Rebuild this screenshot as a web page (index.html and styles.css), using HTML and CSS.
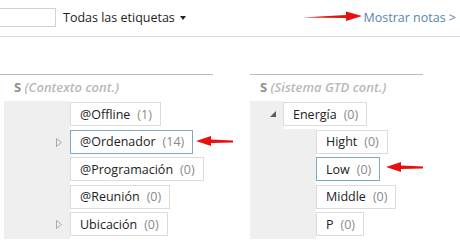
FILE: index.html
```
<!DOCTYPE html>
<html lang="es">
<head>
    <meta charset="UTF-8">
    <title>Etiquetas</title>
    <link rel="stylesheet" href="styles.css">
</head>
<body>
    <div class="topbar">
        <input class="search" type="text">
        <div class="filter">Todas las etiquetas <span class="caret"></span></div>
        <div class="show-notes">Mostrar notas &gt;</div>
    </div>

    <div class="columns">
        <div class="col col-left">
            <div class="col-head"><b>S</b> <i>(Contexto cont.)</i></div>
            <div class="tree">
                <div class="row"><div class="indent lvl2"></div><div class="tag">@Offline<span class="count">(1)</span></div></div>
                <div class="row"><div class="indent lvl2"><svg class="tri-open" width="6" height="9" viewBox="0 0 6 9"><path d="M0.5 0.5 L5.5 4.5 L0.5 8.5 Z" fill="none" stroke="#a8a8a8" stroke-width="1"/></svg></div><div class="tag active">@Ordenador<span class="count">(14)</span></div></div>
                <div class="row"><div class="indent lvl2"></div><div class="tag">@Programación<span class="count">(0)</span></div></div>
                <div class="row"><div class="indent lvl2"></div><div class="tag">@Reunión<span class="count">(0)</span></div></div>
                <div class="row"><div class="indent lvl2"><svg class="tri-open" width="6" height="9" viewBox="0 0 6 9"><path d="M0.5 0.5 L5.5 4.5 L0.5 8.5 Z" fill="none" stroke="#a8a8a8" stroke-width="1"/></svg></div><div class="tag">Ubicación<span class="count">(0)</span></div></div>
            </div>
        </div>
        <div class="col col-right">
            <div class="col-head"><b>S</b> <i>(Sistema GTD cont.)</i></div>
            <div class="tree">
                <div class="row"><div class="indent lvl1"><span class="tri-down"></span></div><div class="tag">Energía<span class="count">(0)</span></div></div>
                <div class="row"><div class="indent lvl2"></div><div class="tag">Hight<span class="count">(0)</span></div></div>
                <div class="row"><div class="indent lvl2"></div><div class="tag active">Low<span class="count">(0)</span></div></div>
                <div class="row"><div class="indent lvl2"></div><div class="tag">Middle<span class="count">(0)</span></div></div>
                <div class="row"><div class="indent lvl2"></div><div class="tag">P<span class="count">(0)</span></div></div>
            </div>
        </div>
    </div>

    <!-- red annotation arrows -->
    <svg class="arrow arrow-top" width="64" height="12" viewBox="0 0 64 12">
        <path d="M2 7.5 L46 5 L46 1.5 L62 6 L46 11 L46 8 Z" fill="#e8100f"/>
    </svg>
    <svg class="arrow arrow-ord" width="40" height="12" viewBox="0 0 40 12">
        <path d="M38 5.5 L16 4.5 L16 1 L1 6 L16 11 L16 8 L38 7.5 Z" fill="#e8100f"/>
    </svg>
    <svg class="arrow arrow-low" width="40" height="12" viewBox="0 0 40 12">
        <path d="M38 5.5 L16 4.5 L16 1 L1 6 L16 11 L16 8 L38 7.5 Z" fill="#e8100f"/>
    </svg>
</body>
</html>
```

FILE: styles.css
```
* {
    margin: 0;
    padding: 0;
    box-sizing: border-box;
}

body {
    width: 460px;
    height: 244px;
    overflow: hidden;
    position: relative;
    background: #fff;
    font-family: "Open Sans", "Noto Sans", sans-serif;
    font-size: 12px;
    color: #222;
}

.topbar {
    height: 37px;
    border-bottom: 1px solid #d6d6d6;
    display: flex;
    align-items: center;
    padding-bottom: 1px;
}

.search {
    width: 57px;
    height: 19px;
    margin-left: -1px;
    border: 1px solid #d2d2d2;
    background: #fff;
    outline: none;
}

.filter {
    margin-left: 7px;
    font-size: 12.5px;
    color: #1e1e1e;
    display: flex;
    align-items: center;
}

.caret {
    display: inline-block;
    margin-left: 5px;
    border-left: 3.5px solid transparent;
    border-right: 3.5px solid transparent;
    border-top: 4px solid #222;
}

.show-notes {
    margin-left: auto;
    margin-right: 4px;
    font-size: 12.5px;
    color: #5b84ae;
}

.columns {
    display: flex;
    padding-top: 37px;
}

.col-left {
    width: 213px;
}

.col-right {
    width: 173px;
    margin-left: 37px;
}

.col-head {
    border-top: 1px solid #bdbdbd;
    height: 27px;
    padding-left: 14px;
    padding-top: 3px;
    font-size: 13px;
    color: #9a9a9a;
}

.col-right .col-head {
    padding-left: 10px;
}

.col-head b {
    font-weight: bold;
    color: #8f8f8f;
}

.col-head i {
    color: #b9b9b9;
    font-weight: 600;
}

.tree {
    padding-bottom: 1px;
}

.col-left .tree {
    margin-left: 4px;
}

.row {
    display: flex;
    height: 27.5px;
}

.indent {
    background: #efefef;
    position: relative;
    flex-shrink: 0;
}

.col-left .indent.lvl2 {
    width: 66px;
}

.col-right .indent.lvl1 {
    width: 33px;
}

.col-right .indent.lvl2 {
    width: 66px;
}

.tag {
    margin-top: 1px;
    height: 24px;
    border: 1px solid #dcdcdc;
    background: #fff;
    padding: 0 8px 0 9px;
    display: flex;
    align-items: center;
    white-space: nowrap;
    font-size: 12.5px;
}

.tag.active {
    border-color: #7ea9c6;
}

.count {
    margin-left: 7px;
    color: #8a8a8a;
}

.tri-open {
    position: absolute;
    left: 52px;
    top: 9px;
}

.tri-down {
    position: absolute;
    left: 20px;
    top: 10px;
    border-left: 6px solid transparent;
    border-bottom: 6px solid #5a5a5a;
}

.arrow {
    position: absolute;
}

.arrow-top {
    left: 300px;
    top: 10px;
}

.arrow-ord {
    left: 195px;
    top: 135px;
}

.arrow-low {
    left: 385px;
    top: 161px;
}
```
